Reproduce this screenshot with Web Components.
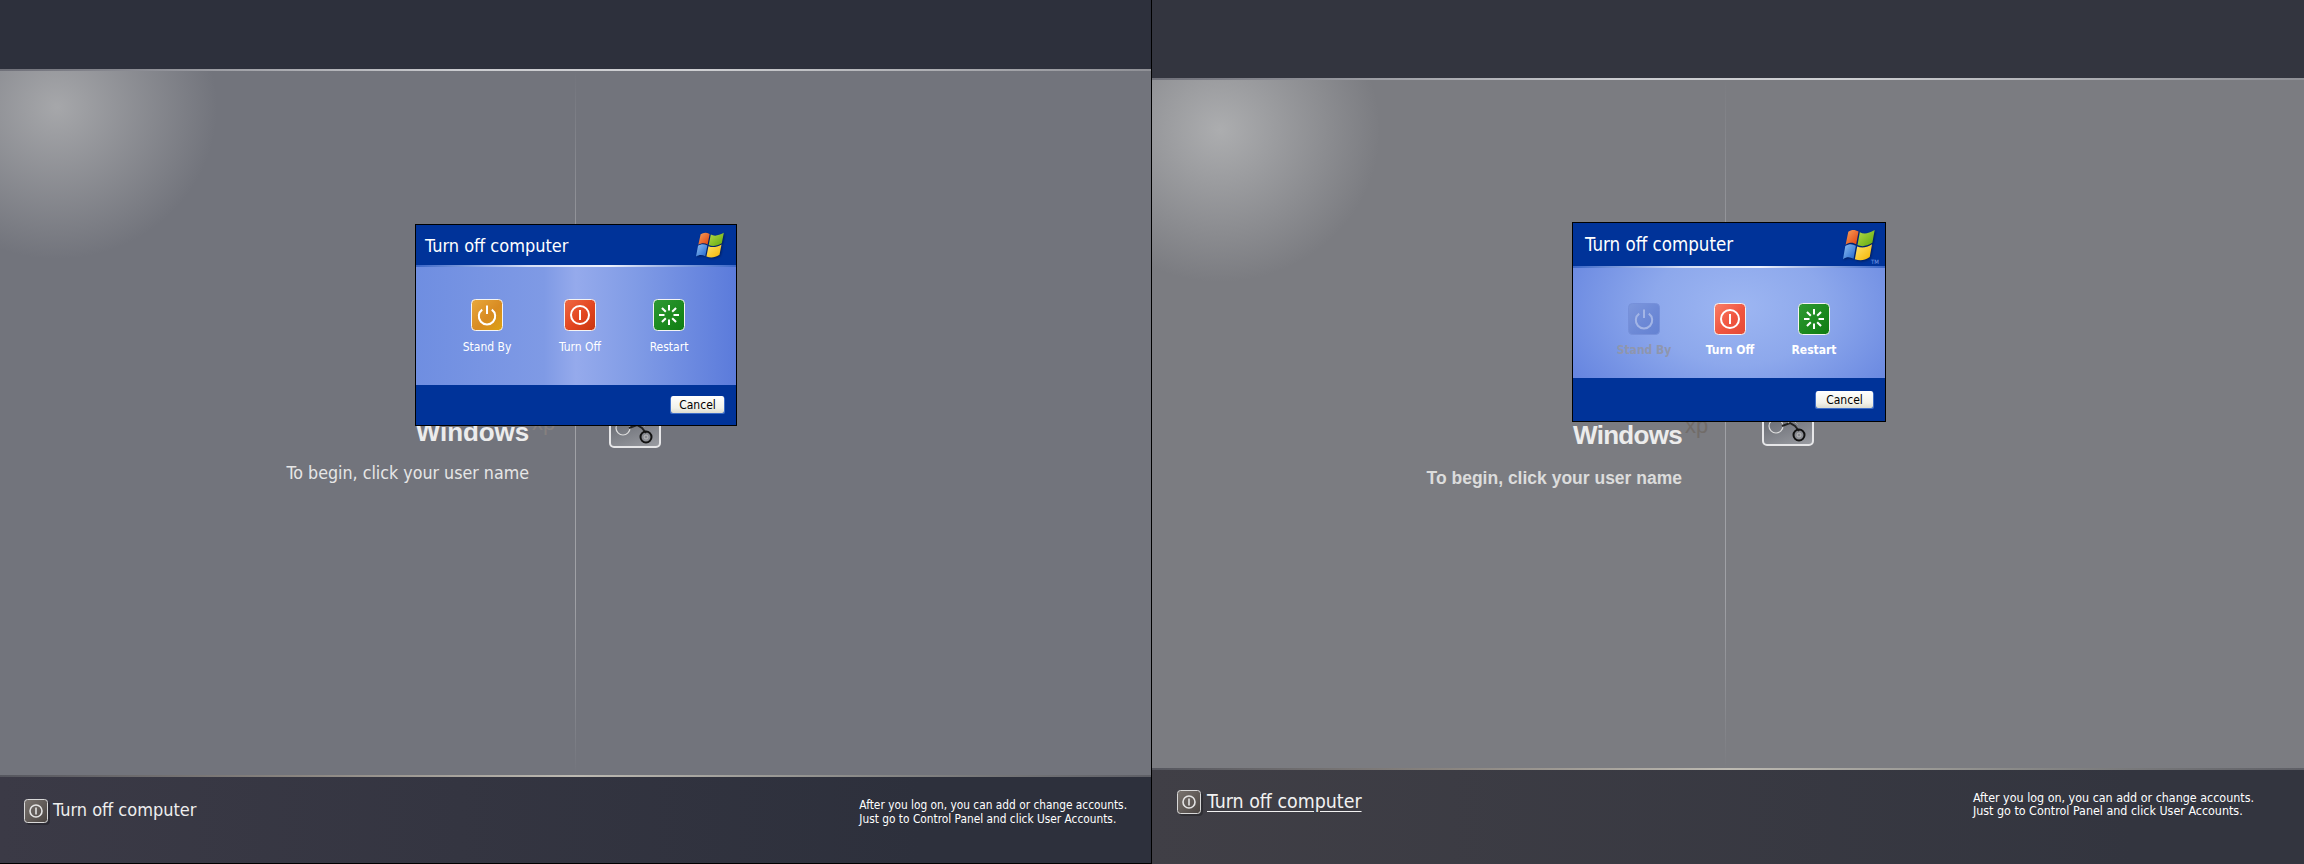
<!DOCTYPE html>
<html>
<head>
<meta charset="utf-8">
<title>Turn off computer</title>
<style>
  html, body { margin: 0; height: 100%; background: #000; overflow: hidden; }
  body { display: flex; width: 2304px; height: 864px; }
</style>
</head>
<body>
<xp-logon-pane variant="a">
  <xp-dialog slot="dialog" variant="a">
    <xp-action kind="standby" style="margin-left:31px">Stand By</xp-action>
    <xp-action kind="off" style="margin-left:13px">Turn Off</xp-action>
    <xp-action kind="restart" style="margin-left:9px">Restart</xp-action>
  </xp-dialog>
</xp-logon-pane>
<xp-logon-pane variant="b">
  <xp-dialog slot="dialog" variant="b">
    <xp-action kind="standby" disabled style="margin-left:31px">Stand By</xp-action>
    <xp-action kind="off" style="margin-left:6px">Turn Off</xp-action>
    <xp-action kind="restart" style="margin-left:4px">Restart</xp-action>
  </xp-dialog>
</xp-logon-pane>

<script>
const TAHOMA = `"DejaVu Sans Condensed", "Noto Sans", sans-serif`;

// tick marks of the restart glyph
function restartTicks() {
  let out = '';
  for (let i = 0; i < 8; i++) {
    out += `<line x1="16" y1="6" x2="16" y2="11.5" transform="rotate(${i * 45} 16 16)"/>`;
  }
  return out;
}

const GLYPHS = {
  standby: `<path d="M11.2 10.6a8.2 8.2 0 1 0 9.6 0" fill="none"/><line x1="16" y1="6.5" x2="16" y2="15"/>`,
  off: `<circle cx="16" cy="16" r="9" fill="none"/><line x1="16" y1="11" x2="16" y2="21"/>`,
  restart: restartTicks()
};

const FILLS = {
  standby: ['#e9a93c', '#d88b22', '#dda312'],
  off: ['#ef6a45', '#e2451f', '#c8360f'],
  restart: ['#2f9a34', '#1c8a1f', '#0f7c12']
};

class XpAction extends HTMLElement {
  constructor() {
    super();
    this.attachShadow({ mode: 'open' });
  }
  connectedCallback() {
    const kind = this.getAttribute('kind');
    const id = 'g-' + kind;
    const c = this.hasAttribute('disabled') ? ['#7d97dc', '#6d89d6', '#6482d2'] : FILLS[kind];
    const fill = this.closest('[variant=b]') && kind === 'off' ? ['#fb7f68', '#f0553f', '#e34a36'] : c;
    this.shadowRoot.innerHTML = `
      <style>
        :host {
          display: flex;
          flex-direction: column;
          align-items: center;
          width: 80px;
          color: #fff;
          font-size: var(--action-size, 12px);
          font-weight: var(--action-weight, 400);
        }
        svg { width: 32px; height: 32px; display: block; margin-bottom: var(--action-gap, 8px); }
        :host([disabled]) { color: #8f96ad; }
        :host([disabled]) rect { stroke: #7690da; }
        :host([disabled]) .glyph { stroke: #a3b5e6; }
        span { line-height: 16px; white-space: nowrap; }
      </style>
      <svg viewBox="0 0 32 32">
        <defs>
          <linearGradient id="${id}" x1="0" y1="0" x2="1" y2="1">
            <stop offset="0" stop-color="${fill[0]}"/>
            <stop offset=".55" stop-color="${fill[1]}"/>
            <stop offset="1" stop-color="${fill[2]}"/>
          </linearGradient>
        </defs>
        <rect x=".5" y=".5" width="31" height="31" rx="4" fill="url(#${id})" stroke="#f4f4f4"/>
        <g class="glyph" stroke="#fff" stroke-width="2">${GLYPHS[kind]}</g>
      </svg>
      <span><slot></slot></span>`;
  }
}
customElements.define('xp-action', XpAction);

class XpFlag extends HTMLElement {
  constructor() {
    super();
    this.attachShadow({ mode: 'open' });
    this.shadowRoot.innerHTML = `
      <style>
        :host { display: block; width: var(--flag-w, 29px); height: var(--flag-h, 26px); }
        svg { display: block; width: 100%; height: 100%; overflow: visible; filter: drop-shadow(1px 1px 1px rgba(0,0,20,.45)); }
      </style>
      <svg viewBox="0 0 100 90" preserveAspectRatio="none">
        <defs>
          <linearGradient id="r" x1="0" y1="0" x2="1" y2="1"><stop offset="0" stop-color="#f6a15d"/><stop offset="1" stop-color="#e0400c"/></linearGradient>
          <linearGradient id="g" x1="0" y1="0" x2="1" y2="1"><stop offset="0" stop-color="#b5dc4a"/><stop offset="1" stop-color="#5fa80c"/></linearGradient>
          <linearGradient id="b" x1="0" y1="0" x2="1" y2="1"><stop offset="0" stop-color="#8fc0f2"/><stop offset="1" stop-color="#1f64cc"/></linearGradient>
          <linearGradient id="y" x1="0" y1="0" x2="1" y2="1"><stop offset="0" stop-color="#ffe470"/><stop offset="1" stop-color="#f4b400"/></linearGradient>
        </defs>
        <path fill="url(#r)" d="M16 8C26 1 36 1 47 7L40 43C30 37 19 37 8 44Z"/>
        <path fill="url(#g)" d="M51 9C63 15 76 14 96 3L89 39C70 50 56 50 44 45Z"/>
        <path fill="url(#b)" d="M7 48C18 41 28 41 39 47L32 84C21 78 11 78 0 85Z"/>
        <path fill="url(#y)" d="M43 49C55 54 70 54 88 43L81 79C64 90 50 90 36 85Z"/>
      </svg>`;
  }
}
customElements.define('xp-flag', XpFlag);

class XpDialog extends HTMLElement {
  constructor() {
    super();
    this.attachShadow({ mode: 'open' });
    this.shadowRoot.innerHTML = `
      <style>
        :host {
          position: absolute;
          box-sizing: border-box;
          display: flex;
          flex-direction: column;
          left: 415px; top: 224px;
          width: 322px; height: 202px;
          border: 1px solid #000;
          background: #003399;
          color: #fff;
          font-family: ${TAHOMA};
          --body-bg: linear-gradient(90deg, #6f8ee1 0, #7f9ae5 40%, #95aaec 50%, #819ce6 68%, #5b7bdb 100%);
        }
        :host([variant=b]) {
          left: 420px; top: 222px;
          width: 314px; height: 200px;
          --title-size: 18.6px;
          --flag-w: 33px;
          --flag-h: 32px;
          --body-bg: radial-gradient(ellipse 190px 130px at 53% 35%, #9db6f2 0, #8da8ec 45%, #6786e0 100%);
          --action-weight: 700;
          --action-gap: 7px;
          --body-h: 110px;
          --head-h: 43px;
          --actions-top: 35px;
          --btn-w: 57px;
        }
        header {
          height: var(--head-h, 40px);
          flex: none;
          display: flex;
          align-items: center;
          justify-content: space-between;
          padding: 0 11px 0 9px;
          box-sizing: border-box;
          font-size: var(--title-size, 18px);
        }
        :host([variant=b]) header { padding: 0 9px 0 12px; }
        .rule { height: 2px; flex: none; background: linear-gradient(90deg, #3a66c8, #d5def5 35%, #eef2fc 60%, #3a66c8); }
        .flag { position: relative; }
        .tm { display: none; position: absolute; right: -3px; bottom: -4px; font-size: 6px; color: #7fa0e8; }
        :host([variant=b]) .tm { display: block; }
        .body {
          height: var(--body-h, 118px);
          flex: none;
          box-sizing: border-box;
          display: flex;
          padding-top: var(--actions-top, 32px);
          background: var(--body-bg);
        }
        footer {
          flex: 1;
          display: flex;
          justify-content: flex-end;
          align-items: flex-start;
          padding: 11px 12px 0 0;
        }
        :host([variant=b]) footer { padding: 13px 12px 0 0; }
        button {
          width: var(--btn-w, 53px);
          height: 17px;
          padding: 0;
          font: 12px ${TAHOMA};
          color: #000;
          border: 0;
          border-radius: 2px;
          background: linear-gradient(#fff, #f2f2ea 70%, #dcdcd0);
          box-shadow: -1px 1px 0 #3e6ec9, 1px 1px 0 #3e6ec9;
        }
      </style>
      <header>
        <span>Turn off computer</span>
        <div class="flag"><xp-flag></xp-flag><span class="tm">TM</span></div>
      </header>
      <div class="rule"></div>
      <div class="body"><slot></slot></div>
      <footer><button>Cancel</button></footer>`;
  }
}
customElements.define('xp-dialog', XpDialog);

class XpLogonPane extends HTMLElement {
  constructor() {
    super();
    this.attachShadow({ mode: 'open' });
    this.shadowRoot.innerHTML = `
      <style>
        :host {
          display: flex;
          flex-direction: column;
          flex: none;
          position: relative;
          box-sizing: border-box;
          height: 864px;
          width: 1152px;
          border-right: 1px solid #000;
          border-bottom: 1px solid #000;
          color: #eee;
          font-family: ${TAHOMA};
          --top-bg: #2d303c;
          --main-bg: #72747c;
          --glow: #a6a7aa;
          --bottom-bg: linear-gradient(90deg, #3b3a46, #2d303c 80%);
          --top-h: 69px;
          --bottom-h: 86px;
          --glow-pos: 57px 36px;
          --col: 575px;
          --col-pad: 46px;
          --col-top: 346px;
          --hint-gap: 15px;
          --brand-track: -.1px;
          --tile-top: 325px;
          --tile-left: 33px;
          --foot-pad: 21px 24px 0 24px;
          --foot-size: 11.8px;
          --foot-line: 14px;
          --note-top: 0;
          --label-lift: 2px;
        }
        :host([variant=b]) {
          border: 0;
          --top-bg: #33353f;
          --main-bg: #7b7c81;
          --glow: #acadaf;
          --bottom-bg: linear-gradient(90deg, #403f46, #33353f 85%);
          --top-h: 78px;
          --bottom-h: 94px;
          --glow-pos: 68px 50px;
          --col: 573px;
          --col-pad: 43px;
          --col-top: 340px;
          --brand-track: -.7px;
          --tile-top: 314px;
          --tile-left: 36px;
          --foot-pad: 20px 50px 0 25px;
          --foot-size: 12.4px;
          --foot-line: 13px;
          --note-top: 1px;
          --label-lift: 0;
        }
        .top { height: var(--top-h); flex: none; background: var(--top-bg); }
        .line { height: 2px; flex: none; }
        .line.upper { background: linear-gradient(90deg, #6f7079, #9fa0a6 20%, #cbccd0 40%, #cfd0d3 60%, #8f9096); }
        .line.lower { background: linear-gradient(90deg, #55565e, #8a8580 26%, #bdbab2 50%, #8a8a88 75%, #5e5f66); }
        .main {
          flex: 1;
          min-height: 0;
          display: grid;
          grid-template-columns: var(--col) 1px 1fr;
          background: radial-gradient(ellipse 160px 152px at var(--glow-pos), var(--glow), transparent) no-repeat, var(--main-bg);
        }
        .welcome {
          padding: var(--col-top) var(--col-pad) 0 0;
          display: flex;
          flex-direction: column;
          align-items: flex-end;
          text-align: right;
        }
        .brand {
          position: relative;
          font: 700 26px/30px "Liberation Sans", sans-serif;
          letter-spacing: var(--brand-track);
          color: #ececec;
        }
        .brand sup {
          position: absolute;
          left: 100%;
          top: -7px;
          margin-left: 3px;
          font: 400 22px/26px "Liberation Sans", sans-serif;
          letter-spacing: 0;
          color: #85807f;
        }
        :host([variant=b]) .brand sup { color: #716c69; }
        .hint { margin-top: var(--hint-gap); font-size: 17.7px; line-height: 22px; color: #e6e6e6; white-space: nowrap; }
        :host([variant=b]) .hint { font: 700 17.5px/22px "Liberation Sans", sans-serif; color: #dcdcdc; margin-top: 17px; }
        .rule { background: linear-gradient(transparent, #a0a1a6 30%, #a0a1a6 75%, transparent); }
        .users { padding: var(--tile-top) 0 0 var(--tile-left); }
        .tile {
          display: block;
          box-sizing: border-box;
          width: 52px; height: 52px;
          border: 2px solid #e6e6e8;
          border-radius: 5px;
          background: linear-gradient(160deg, #4d5058, #9a9ca2);
        }
        .bottom {
          height: var(--bottom-h);
          flex: none;
          display: flex;
          justify-content: space-between;
          align-items: flex-start;
          box-sizing: border-box;
          padding: var(--foot-pad);
          background: var(--bottom-bg);
        }
        .off { display: flex; align-items: center; gap: 5px; font-size: 18px; line-height: 24px; }
        .off span { padding-bottom: var(--label-lift); }
        :host([variant=b]) .off { gap: 6px; font-size: 19.4px; }
        :host([variant=b]) .off span { text-decoration: underline; text-underline-offset: 3px; color: #f2f2f2; }
        .off svg { width: 24px; height: 24px; display: block; filter: drop-shadow(2px 2px 0 rgba(0,0,0,.25)); }
        .note { margin-top: var(--note-top); font-size: var(--foot-size); line-height: var(--foot-line); color: #fff; }
      </style>
      <div class="top"></div>
      <div class="line upper"></div>
      <div class="main">
        <div class="welcome">
          <div class="brand">Windows<sup>xp</sup></div>
          <div class="hint">To begin, click your user name</div>
        </div>
        <div class="rule"></div>
        <div class="users">
          <svg class="tile" viewBox="0 0 48 48" fill="none" stroke="#111">
            <circle cx="12" cy="30" r="7" stroke="#dddddd" stroke-width="1.2"/>
            <path d="M18 30l8-3 5 3 4 5" stroke="#222" stroke-width="2"/>
            <path d="M24 27l3-2 4 1 3 3" stroke="#ccc" stroke-width="1" stroke-dasharray="1 1"/>
            <circle cx="35" cy="39" r="5.5" stroke-width="2"/>
            <circle cx="35" cy="39" r="2" stroke="#bbb"/>
          </svg>
        </div>
      </div>
      <div class="line lower"></div>
      <div class="bottom">
        <div class="off">
          <svg viewBox="0 0 24 24">
            <defs><linearGradient id="pw" x1="0" y1="0" x2="1" y2="1"><stop offset="0" stop-color="#7a7470"/><stop offset="1" stop-color="#4a4441"/></linearGradient></defs>
            <rect x=".5" y=".5" width="23" height="23" rx="3" fill="url(#pw)" stroke="#d8d8d8"/>
            <circle cx="12" cy="12" r="6" fill="none" stroke="#e4e4e4" stroke-width="1.6"/>
            <line x1="12" y1="8.5" x2="12" y2="15.5" stroke="#e4e4e4" stroke-width="1.6"/>
          </svg>
          <span>Turn off computer</span>
        </div>
        <div class="note">After you log on, you can add or change accounts.<br>Just go to Control Panel and click User Accounts.</div>
      </div>
      <slot name="dialog"></slot>`;
  }
}
customElements.define('xp-logon-pane', XpLogonPane);
</script>
</body>
</html>
